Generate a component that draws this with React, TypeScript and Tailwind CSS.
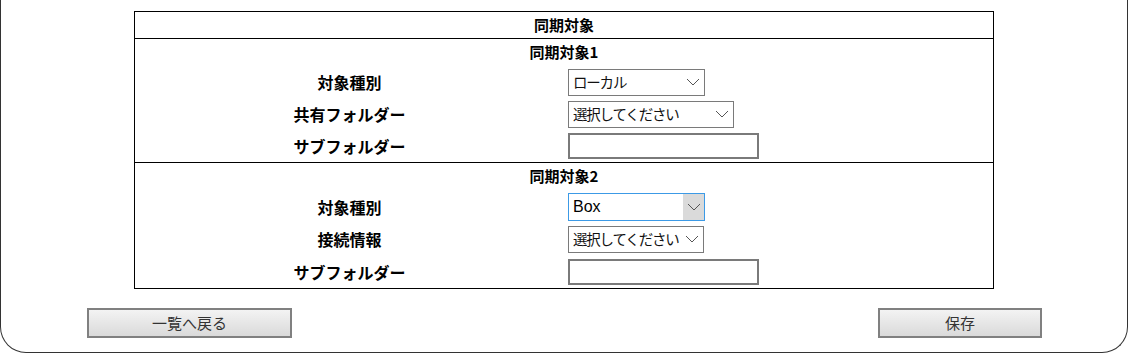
const jp = { fontFamily: '"Noto Sans CJK JP", "Noto Sans", sans-serif' };

function Chevron() {
  return (
    <svg width="14" height="8" viewBox="0 0 14 8" className="shrink-0">
      <path d="M1 1 L7 7 L13 1" fill="none" stroke="#555" strokeWidth="1" />
    </svg>
  );
}

function Select({ value, width, focused }: { value: string; width: string; focused?: boolean }) {
  if (focused) {
    return (
      <div className={`flex h-[28px] ${width} items-stretch border border-[#3c9ae6] bg-white`}>
        <span className="flex flex-1 items-center pl-[4px] text-[16px] text-black" style={{ fontFamily: '"Liberation Sans", Arial, sans-serif' }}>
          {value}
        </span>
        <span className="flex w-[21px] items-center justify-center bg-[#dadada]">
          <Chevron />
        </span>
      </div>
    );
  }
  return (
    <div className={`flex h-[27px] ${width} items-center justify-between border border-[#7a7a7a] bg-white pl-[4px] pr-[4px]`}>
      <span className="text-[14.5px] leading-none tracking-[-1.2px] text-[#111]" style={jp}>
        {value}
      </span>
      <Chevron />
    </div>
  );
}

function TextBox() {
  return <div className="h-[26px] w-[191px] border-2 border-[#7a7a7a] bg-white" />;
}

type Row = { label: string; field: React.ReactNode; h: string };

function Section({ title, rows, last }: { title: string; rows: Row[]; last?: boolean }) {
  return (
    <div className={last ? "" : "border-b border-black"}>
      <div className="flex h-[27px] items-center justify-center text-[15px] font-bold text-black">{title}</div>
      {rows.map((r) => (
        <div key={r.label} className={`flex ${r.h} items-center`}>
          <div className="w-[429px] text-center text-[16px] font-bold text-black">{r.label}</div>
          <div className="pl-[4px]">{r.field}</div>
        </div>
      ))}
    </div>
  );
}

export default function App() {
  return (
    <div className="h-[354px] w-[1128px] bg-white" style={jp}>
      <div className="h-[353px] rounded-b-[26px] border-x border-b border-[#333] pt-[11px]">
        <div className="ml-[133px] w-[860px] border border-black">
          <div className="flex h-[27px] items-center justify-center border-b border-black text-[15px] font-bold text-black">
            同期対象
          </div>
          <Section
            title="同期対象1"
            rows={[
              { label: "対象種別", field: <Select value="ローカル" width="w-[137px]" />, h: "h-[32px]" },
              { label: "共有フォルダー", field: <Select value="選択してください" width="w-[166px]" />, h: "h-[32px]" },
              { label: "サブフォルダー", field: <TextBox />, h: "h-[32px]" },
            ]}
          />
          <Section
            title="同期対象2"
            last
            rows={[
              { label: "対象種別", field: <Select value="Box" width="w-[137px]" focused />, h: "h-[33px]" },
              { label: "接続情報", field: <Select value="選択してください" width="w-[136px]" />, h: "h-[32px]" },
              { label: "サブフォルダー", field: <TextBox />, h: "h-[33px]" },
            ]}
          />
        </div>
        <div className="mt-[19px] flex justify-between pl-[86px] pr-[85px]">
          <button className="h-[30px] w-[205px] border-2 border-[#808080] bg-gradient-to-b from-[#f3f3f3] to-[#dadada] text-[15px] text-[#333]">
            一覧へ戻る
          </button>
          <button className="h-[30px] w-[164px] border-2 border-[#808080] bg-gradient-to-b from-[#f3f3f3] to-[#dadada] text-[15px] text-[#333]">
            保存
          </button>
        </div>
      </div>
    </div>
  );
}
